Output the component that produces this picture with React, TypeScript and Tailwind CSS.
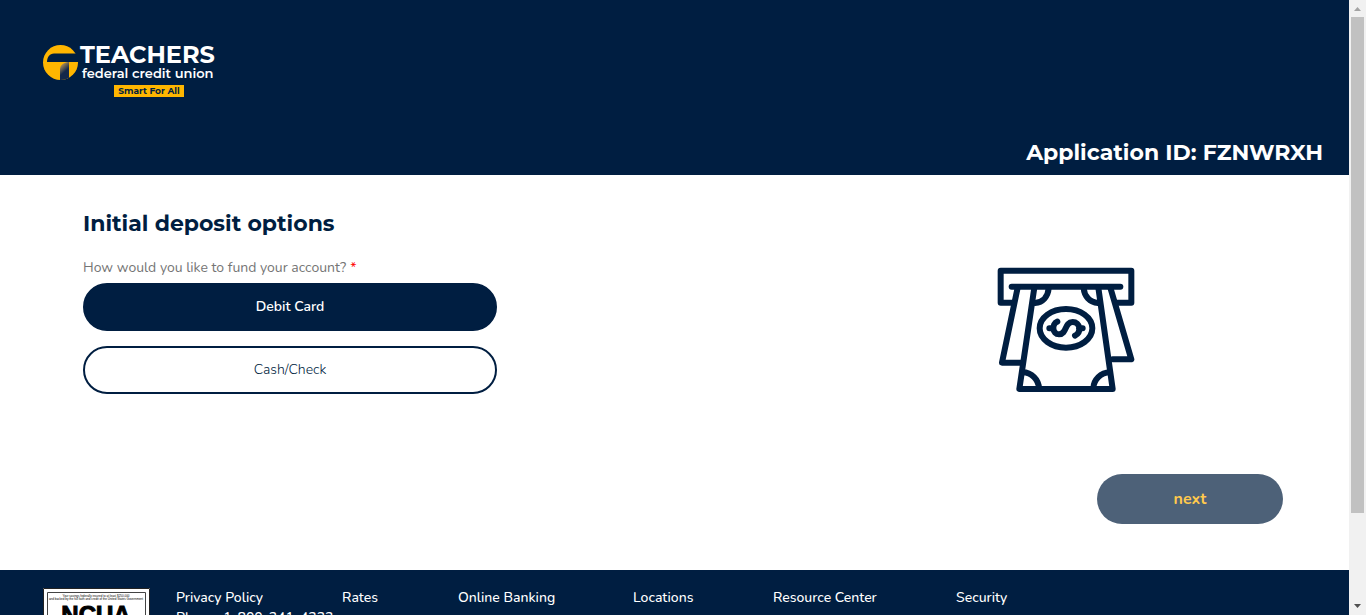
import { useState } from "react";

const links = ["Privacy Policy", "Rates", "Online Banking", "Locations", "Resource Center", "Security"];

function Logo() {
  return (
    <svg width="178" height="56" viewBox="0 0 178 56" role="img" aria-label="Teachers federal credit union">
      <defs>
        <clipPath id="disc">
          <circle cx="18.5" cy="18.5" r="17.5" />
        </clipPath>
        <linearGradient id="fade" x1="0" y1="0" x2="0.4" y2="1">
          <stop offset="0" stopColor="#e0a82a" />
          <stop offset="0.25" stopColor="#8f7b56" />
          <stop offset="0.6" stopColor="#14284a" />
        </linearGradient>
      </defs>
      <circle cx="18.5" cy="18.5" r="17.5" fill="#ffb600" />
      <path d="M5 18C5 13 7.500 10 12 9.500H37V18Z" fill="#001e41" />
      <g clipPath="url(#disc)">
        <path d="M18 38V25C18.500 21 21 18.500 27 18V38Z" fill="url(#fade)" />
      </g>
      <g className="font-['Montserrat','Lato',sans-serif]" fill="#fff">
        <text x="38" y="19" fontSize="24" fontWeight="700">TEACHERS</text>
        <text x="40" y="34" fontSize="13" fontWeight="600">federal credit union</text>
      </g>
      <rect x="72" y="41" width="70" height="12" fill="#ffb600" />
      <text x="107" y="50" textAnchor="middle" fontSize="9" fontWeight="700" fill="#001e41" className="font-['Montserrat','Inter',sans-serif]">
        Smart For All
      </text>
    </svg>
  );
}

function CashIcon() {
  return (
    <svg width="160" height="150" viewBox="0 0 480 450" fill="none" stroke="#001e41" strokeWidth="18" strokeLinecap="round" strokeLinejoin="round" aria-hidden="true">
      <path d="M86 143H47V47H439V143H392" />
      <path d="M80 95H406" />
      <path d="M98 98L51 323H108M376 98L439 313H383" />
      <path d="M148 98L103 402H383L340 98" />
      <path d="M191 100C189 124 174 142 150 144M296 100C298 124 314 142 339 144" />
      <path d="M113 352C140 352 161 374 162 400M375 352C347 353 326 374 325 400" />
      <ellipse cx="243" cy="220" rx="79" ry="58" />
      <path d="M193 220H204M282 220H293M217 200C199 207 202 238 222 238C246 238 238 201 263 201C286 201 290 231 270 242" />
    </svg>
  );
}

function NcuaBadge() {
  return (
    <svg width="107" height="56" viewBox="0 0 107 56" role="img" aria-label="NCUA" className="font-['Liberation_Sans',sans-serif]">
      <rect width="107" height="56" fill="#fff" />
      <path d="M.5 56V.5H106.500V56" fill="none" stroke="#222" />
      <path d="M4.500 56V4.500H102.500V56" fill="none" stroke="#444" />
      <text x="53" y="9" textAnchor="middle" fontSize="3">Your savings federally insured to at least $250,000</text>
      <text x="53" y="12" textAnchor="middle" fontSize="3">and backed by the full faith and credit of the United States Government</text>
      <text x="53" y="35" textAnchor="middle" fontSize="24" fontWeight="700" stroke="#000">NCUA</text>
    </svg>
  );
}

function ScrollTrack() {
  return (
    <div className="flex w-[17px] shrink-0 flex-col bg-[#f1f1f1]" aria-hidden="true">
      <svg width="17" height="17" viewBox="0 0 17 17">
        <path d="M5 11L8.500 7L12 11Z" fill="#a3a3a3" />
      </svg>
      <div className="flex grow flex-col px-0.5 pb-0.5">
        <div className="grow-[6] bg-[#c1c1c1]" />
        <div className="grow" />
      </div>
      <svg width="17" height="17" viewBox="0 0 17 17">
        <path d="M5 6L8.500 10L12 6Z" fill="#505050" />
      </svg>
    </div>
  );
}

export default function App() {
  const [method, setMethod] = useState("Debit Card");
  return (
    <div className="flex h-screen overflow-hidden bg-white font-['Nunito','Noto_Sans',sans-serif] text-sm">
      <div className="min-w-0 grow overflow-hidden">
        <header className="flex flex-col bg-[#001e41] pt-11 pr-[26px] pb-[7px] pl-[42px]">
          <Logo />
          <p className="self-end pt-[38px] font-['Montserrat','Inter',sans-serif] text-[22px] leading-[30px] font-bold text-white">Application ID: FZNWRXH</p>
        </header>

        <main className="pr-[66px] pb-[46px] pl-[83px]">
          <div className="flex justify-between">
            <div className="w-[414px] pt-[33px]">
              <h1 className="font-['Montserrat','Inter',sans-serif] text-[22px] leading-8 font-bold text-[#001e41]">Initial deposit options</h1>
              <div role="group" aria-labelledby="fund-label" className="pt-[18px]">
                <p id="fund-label" className="flex gap-1 pb-[5px] leading-5 text-[#757575]">
                  How would you like to fund your account? <span className="text-[#ff0000]">*</span>
                </p>
                <div className="flex flex-col gap-[15px]">
                  {["Debit Card", "Cash/Check"].map((name) => (
                    <button
                      key={name}
                      type="button"
                      aria-pressed={method === name}
                      onClick={() => setMethod(name)}
                      className={
                        method === name
                          ? "h-12 rounded-full border-2 border-[#001e41] bg-[#001e41] font-semibold text-white"
                          : "h-12 rounded-full border-2 border-[#001e41] bg-white font-light text-[#001e41]"
                      }
                    >
                      {name}
                    </button>
                  ))}
                </div>
              </div>
            </div>
            <div className="pt-20 pr-[138px]">
              <CashIcon />
            </div>
          </div>
          <div className="flex justify-end pt-[69px]">
            <button type="button" className="h-[50px] w-[186px] rounded-full bg-[#4d6178] text-base font-bold text-[#ffc94d]">
              next
            </button>
          </div>
        </main>

        <footer className="flex gap-[26px] bg-[#001e41] pt-[18px] pl-[43px] text-white">
          <div className="shrink-0">
            <NcuaBadge />
          </div>
          <div>
            <nav className="grid grid-cols-[166px_116px_175px_140px_183px_auto] leading-5 font-medium">
              {links.map((name) => (
                <a key={name} href="#" className="whitespace-nowrap">{name}</a>
              ))}
            </nav>
            <p className="leading-5 font-medium">Phone: 1-800-341-4333</p>
          </div>
        </footer>
      </div>
      <ScrollTrack />
    </div>
  );
}
